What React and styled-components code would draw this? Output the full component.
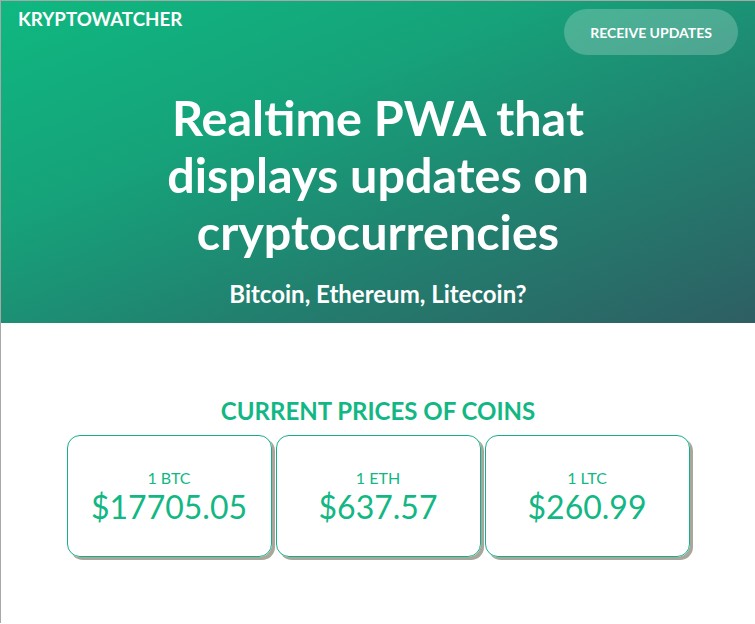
import React from "react";
import styled, { createGlobalStyle } from "styled-components";

const GlobalStyle = createGlobalStyle`
  body {
    margin: 0;
    font-family: Lato, "Open Sans", sans-serif;
    background: #fff;
  }
`;

const coins = [
  { name: "1 BTC", price: "$17705.05" },
  { name: "1 ETH", price: "$637.57" },
  { name: "1 LTC", price: "$260.99" },
];

const App = () => {
  return (
    <Page>
      <GlobalStyle />
      <Hero>
        <TopBar>
          <Logo>KRYPTOWATCHER</Logo>
          <UpdateButton>RECEIVE UPDATES</UpdateButton>
        </TopBar>
        <Title>
          Realtime PWA that
          <br />
          displays updates on
          <br />
          cryptocurrencies
        </Title>
        <Subtitle>Bitcoin, Ethereum, Litecoin?</Subtitle>
      </Hero>
      <Prices>
        <PricesTitle>CURRENT PRICES OF COINS</PricesTitle>
        <Cards>
          {coins.map((coin) => (
            <Card key={coin.name}>
              <CoinName>{coin.name}</CoinName>
              <CoinPrice>{coin.price}</CoinPrice>
            </Card>
          ))}
        </Cards>
      </Prices>
    </Page>
  );
};

const Page = styled.div`
  border-top: 1px solid #a8a8a8;
  border-left: 1px solid #a8a8a8;
  min-height: 622px;
`;

const Hero = styled.header`
  height: 322px;
  background: linear-gradient(158deg, #0fb880 0%, #16a27a 35%, #21816f 65%, #2e5e63 100%);
  color: #fff;
  display: flex;
  flex-direction: column;
  align-items: center;
`;

const TopBar = styled.div`
  align-self: stretch;
  display: flex;
  justify-content: space-between;
  align-items: flex-start;
  padding: 8px 17px 0 17px;
`;

const Logo = styled.div`
  font-size: 18.7px;
  line-height: 20px;
  font-weight: 700;
`;

const UpdateButton = styled.button`
  border: none;
  background: rgba(255, 255, 255, 0.22);
  color: #fff;
  font-family: Lato, sans-serif;
  font-weight: 700;
  font-size: 14px;
  width: 174px;
  height: 46px;
  border-radius: 23px;
  cursor: pointer;
`;

const Title = styled.h1`
  margin: 34px 0 0 0;
  font-size: 48.5px;
  line-height: 57px;
  font-weight: 700;
  text-align: center;
`;

const Subtitle = styled.h2`
  margin: 20px 0 0 0;
  font-size: 24px;
  line-height: 28px;
  font-weight: 700;
  text-align: center;
`;

const Prices = styled.section`
  display: flex;
  flex-direction: column;
  align-items: center;
  padding-top: 74px;
`;

const PricesTitle = styled.h3`
  margin: 0 0 10px 0;
  font-size: 24px;
  line-height: 28px;
  font-weight: 700;
  color: #12b784;
`;

const Cards = styled.div`
  display: flex;
  gap: 4px;
`;

const Card = styled.div`
  width: 205px;
  height: 122px;
  box-sizing: border-box;
  border: 1px solid #17ad8a;
  border-radius: 13px;
  box-shadow: 3px 3px 0 #a9a79c;
  display: flex;
  flex-direction: column;
  align-items: center;
  justify-content: center;
  color: #12b784;
  padding-top: 2px;
`;

const CoinName = styled.div`
  font-size: 16px;
  line-height: 20px;
`;

const CoinPrice = styled.div`
  font-size: 32px;
  line-height: 38px;
`;

export default App;
